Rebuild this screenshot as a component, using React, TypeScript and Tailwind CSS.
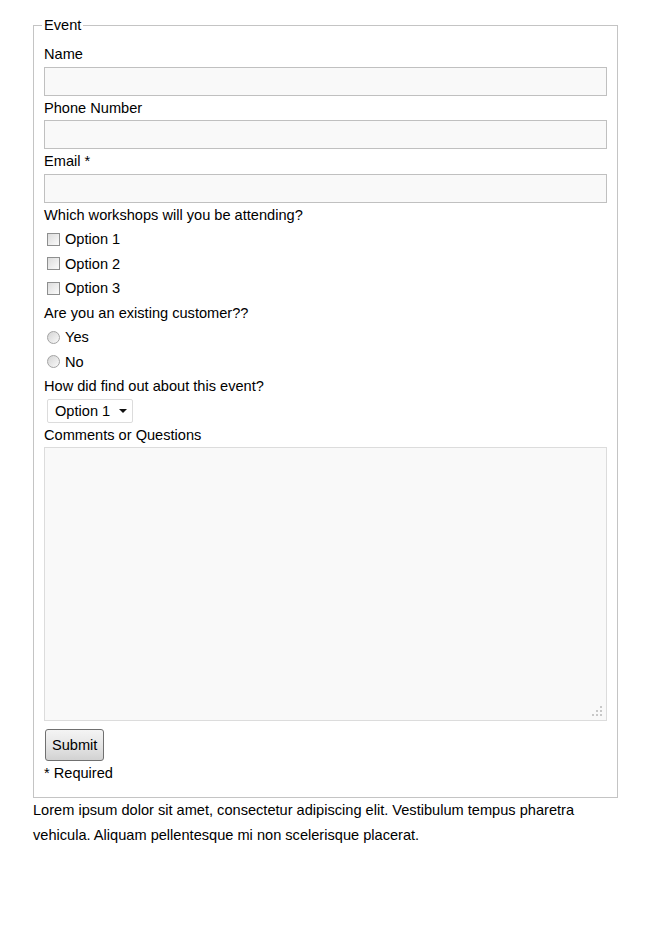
import React from 'react';

const font = { fontFamily: '"Liberation Sans", Arial, sans-serif' };

const Checkbox: React.FC<{ label: string }> = ({ label }) => (
  <label className="flex h-[24.5px] items-center">
    <span className="ml-[3px] mr-[5px] h-[13px] w-[13px] border border-[#8e8f8f] bg-gradient-to-br from-[#dcdcdc] to-[#fbfbfb]" />
    <span>{label}</span>
  </label>
);

const Radio: React.FC<{ label: string }> = ({ label }) => (
  <label className="flex h-[24.5px] items-center">
    <span className="ml-[3px] mr-[5px] h-[13px] w-[13px] rounded-full border border-[#a3a3a3] bg-gradient-to-br from-[#d4d4d4] to-[#fafafa]" />
    <span>{label}</span>
  </label>
);

const Grip = () => (
  <svg className="absolute bottom-[3px] right-[3px]" width="12" height="12" viewBox="0 0 12 12">
    <rect x="9" y="1" width="2" height="2" fill="#c8c8c8" />
    <rect x="9" y="5" width="2" height="2" fill="#c8c8c8" />
    <rect x="5" y="5" width="2" height="2" fill="#c8c8c8" />
    <rect x="9" y="9" width="2" height="2" fill="#c8c8c8" />
    <rect x="5" y="9" width="2" height="2" fill="#c8c8c8" />
    <rect x="1" y="9" width="2" height="2" fill="#c8c8c8" />
  </svg>
);

export default function App() {
  return (
    <div className="min-h-[940px] bg-white pl-[33px] pr-[32px] pt-[17px] text-[14.6px] leading-[24.5px] text-[#000]" style={font}>
      <fieldset className="w-[585px] border border-[#c4c4c4] px-[10px] pb-[11px] pt-[9px]">
        <legend className="-ml-[2px] px-[2px] leading-[16px]">Event</legend>

        <div>Name</div>
        <div className="h-[29px] w-full border border-[#c0c0c0] bg-[#f9f9f9]" />
        <div>Phone Number</div>
        <div className="h-[29px] w-full border border-[#c0c0c0] bg-[#f9f9f9]" />
        <div>Email *</div>
        <div className="h-[29px] w-full border border-[#c0c0c0] bg-[#f9f9f9]" />

        <div>Which workshops will you be attending?</div>
        <Checkbox label="Option 1" />
        <Checkbox label="Option 2" />
        <Checkbox label="Option 3" />

        <div>Are you an existing customer??</div>
        <Radio label="Yes" />
        <Radio label="No" />

        <div>How did find out about this event?</div>
        <div className="h-[24px]">
          <div className="ml-[3px] flex h-[24px] w-[86px] items-center justify-between rounded-[2px] border border-[#dcdcdc] bg-white pl-[7px] pr-[5px]">
            <span className="leading-[20px]">Option 1</span>
            <svg width="8" height="4" viewBox="0 0 8 4">
              <polygon points="0,0 8,0 4,4" fill="#111" />
            </svg>
          </div>
        </div>

        <div>Comments or Questions</div>
        <div className="relative h-[274px] w-full border border-[#dcdcdc] bg-[#f9f9f9]">
          <Grip />
        </div>

        <div className="pt-[8px]">
          <button className="ml-px h-[32px] rounded-[3px] border border-[#707070] bg-gradient-to-b from-[#f4f4f4] via-[#e6e6e6] to-[#d2d2d2] px-[6px] leading-[20px] text-[#000]">
            Submit
          </button>
        </div>
        <div>* Required</div>
      </fieldset>

      <p className="w-[585px] leading-[25px]">
        Lorem ipsum dolor sit amet, consectetur adipiscing elit. Vestibulum tempus pharetra vehicula. Aliquam pellentesque mi non scelerisque placerat.
      </p>
    </div>
  );
}
